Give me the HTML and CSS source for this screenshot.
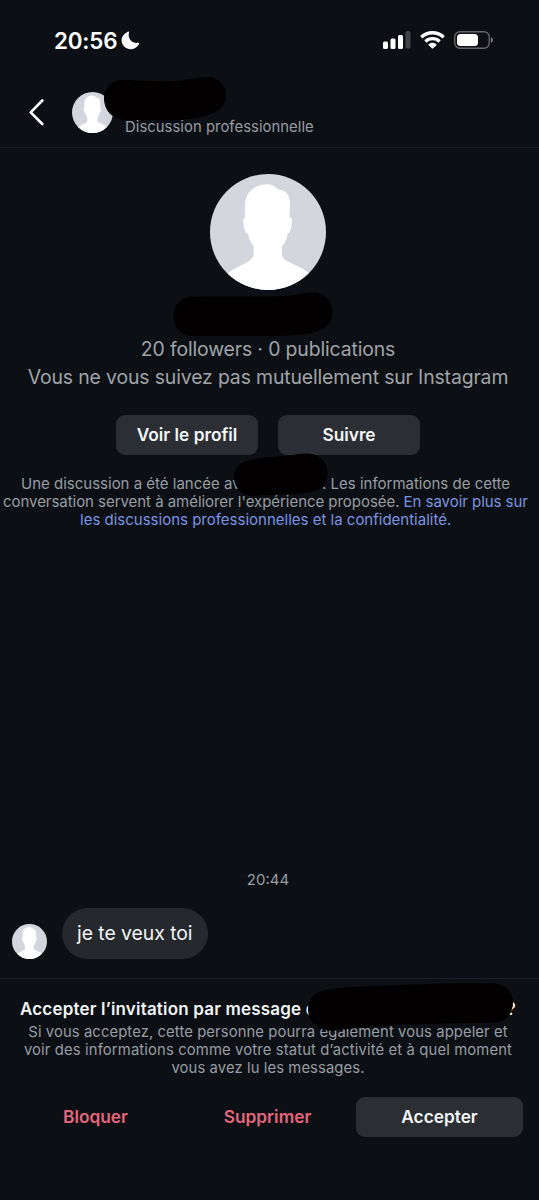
FILE: index.html
```html
<!DOCTYPE html>
<html lang="fr">
<head>
<meta charset="utf-8">
<title>Discussion</title>
<link rel="stylesheet" href="styles.css">
</head>
<body>
<svg class="defs" width="0" height="0" aria-hidden="true">
  <symbol id="avatar" viewBox="0 0 116 116">
    <clipPath id="round"><circle cx="58" cy="58" r="58"/></clipPath>
    <g clip-path="url(#round)">
      <rect width="116" height="116" fill="#d3d6dc"/>
      <path fill="#fff" d="M35.500 43C33 28 36.500 19 44 14C51 9 63 8.500 68 15.500C77 16 80 22 80 31L79.500 43C82.500 43 82.500 48 81 54C80 59 79 58.500 77.500 60C77 65 75 69 72 72V80C72 84 75 86 79 88C87 92 93 94 99 99L110 117H6L18 99C26 93 33 91 39 87C43 84 43.500 83 43.500 80V72C40 68 39 64 38 60C35.500 59 34.500 56 34 53C33 48 32.500 44 35.500 43Z"/>
    </g>
  </symbol>
</svg>
<div class="screen">
  <div class="status">
    <span class="clock">20:56</span>
    <svg class="moon" width="19" height="19" viewBox="0 0 19 19"><path fill="#fff" d="M6.800.8C7.700.3 8.300.9 8 1.800C6.500 7 10.500 12.600 16.800 11.800C18 11.600 18.500 12.300 17.900 13.200C14.500 19 7.500 19.600 3.400 15.700C-1.200 11.300-.3 4 6.800.8Z"/></svg>
    <svg class="signal" width="28" height="18" viewBox="0 0 28 18">
      <g fill="#fff"><rect x="0" y="10.500" width="5" height="7.500" rx="1.500"/><rect x="7.500" y="7.500" width="5" height="10.500" rx="1.500"/><rect x="15" y="4" width="5" height="14" rx="1.500"/></g>
      <rect x="22.500" y="0" width="5" height="17.500" rx="1.500" fill="#404347"/>
    </svg>
    <svg class="wifi" width="25" height="18" viewBox="0 0 25 18">
      <g fill="none" stroke="#fff" stroke-width="3.400"><path d="M1.300 6.200C7.500.2 17.500.2 23.700 6.200"/><path d="M5.400 10.400C9.400 6.700 15.600 6.700 19.600 10.400"/></g>
      <path fill="#fff" d="M8.700 13.300C10.900 11.300 14.100 11.300 16.300 13.300C16.700 13.700 16.600 14 16.300 14.300L13.200 17.300Q12.500 17.900 11.800 17.300L8.700 14.300Q8.200 13.800 8.700 13.300Z"/>
    </svg>
    <svg class="battery" width="40" height="18" viewBox="0 0 40 18">
      <rect x=".7" y=".7" width="34.600" height="16.600" rx="5.300" fill="none" stroke="#65676b" stroke-width="1.400"/>
      <rect x="3" y="3" width="21" height="12" rx="3.500" fill="#fff"/>
      <path d="M37 6.200Q39 7 39 9T37 11.800Z" fill="#7b7d80"/>
    </svg>
  </div>
  <header class="header">
    <svg class="back" width="16" height="27" viewBox="0 0 16 27"><path d="M13.300 1.500L1.700 13.300L13.300 25" fill="none" stroke="#fff" stroke-width="2.600" stroke-linecap="round" stroke-linejoin="round"/></svg>
    <svg class="pic-s"><use href="#avatar"/></svg>
    <span class="kind">Discussion professionnelle</span>
  </header>
  <main class="thread">
    <svg class="pic-l"><use href="#avatar"/></svg>
    <div class="facts">
      <div class="stats">20 followers · 0 publications</div>
      <div class="mutual">Vous ne vous suivez pas mutuellement sur Instagram</div>
    </div>
    <div class="actions"><div class="btn"><span>Voir le profil</span></div><div class="btn"><span>Suivre</span></div></div>
    <div class="notice">
      <div class="n1"><span class="before">Une discussion a été lancée avec</span><span>. Les informations de cette</span></div>
      <div class="n2">conversation servent à améliorer l'expérience proposée. <span class="link">En savoir plus sur</span></div>
      <div class="n3"><span class="link">les discussions professionnelles et la confidentialité.</span></div>
    </div>
    <div class="time">20:44</div>
    <div class="message"><svg class="pic-m"><use href="#avatar"/></svg><div class="bubble">je te veux toi</div></div>
  </main>
  <footer class="request">
    <div class="ask"><span>Accepter l’invitation par message d</span><span>?</span></div>
    <div class="detail">
      <div class="d1">Si vous acceptez, cette personne pourra également vous appeler et</div>
      <div class="d2">voir des informations comme votre statut d’activité et à quel moment</div>
      <div class="d3">vous avez lu les messages.</div>
    </div>
    <div class="choices"><div class="choice danger">Bloquer</div><div class="choice danger">Supprimer</div><div class="choice accept">Accepter</div></div>
  </footer>
  <!-- Hand-drawn strokes hiding the names -->
  <svg class="marks" width="539" height="1200" viewBox="0 0 539 1200">
    <path d="M124 80C140 80 150 82 177 81C188 80 196 77 207 77C218 77 226 85 226 95C226 110 212 115 197 118C175 122 150 119 127 120C113 120 104 111 104 98C104 88 112 80 124 80Z"/>
    <path d="M193 296.500C230 295.500 260 297 287 296C298 295 304 292.500 313 292.500C325 292.500 332.500 302 332.500 313C332.500 326 321 332 303 334.500C270 337 230 335.500 193 336C181 336 173.500 327 173.500 316C173.500 305 181 296.500 193 296.500Z"/>
    <path d="M253 459.500C265 456 281 457 293 455C298 453.500 302 453.500 308 453.500C320 454 327.500 463 327.500 473C327.500 485 320 491 309 492.500C290 495 270 494.500 254 496C242 496 234 488 234 477C234 468 241 461 253 459.500Z"/>
    <path d="M326 990C350 985.500 376 986.500 402 985C435 983.500 465 983 493 983.500C506 984 513 992 513 1002C513 1014 506 1022 495 1022.500L429 1024C390 1025 360 1027 336 1030.500C318 1033 308 1021 308 1009C308 998 315 992 326 990Z"/>
  </svg>
</div>
</body>
</html>
```

FILE: styles.css
```css
body { margin: 0; background: #0c1014; }
.screen {
  position: relative;
  width: 539px;
  height: 1200px;
  box-sizing: border-box;
  overflow: hidden;
  display: flex;
  flex-direction: column;
  background: #0c1014;
  color: #f3f5f7;
  font-family: Inter, "Liberation Sans", sans-serif;
  white-space: nowrap;
}
svg { display: block; flex: none; }
.defs { position: absolute; }
.marks { position: absolute; left: 0; top: 0; fill: #020001; }

.status { height: 80px; box-sizing: border-box; padding-left: 54px; display: flex; align-items: center; }
.clock { width: 67px; font-size: 22.4px; font-weight: 580; letter-spacing: -0.2px; color: #fff; }
.moon { margin-top: 1px; }
.signal { margin-left: 243px; }
.wifi { margin-left: 9px; }
.battery { margin-left: 9px; }

.header { height: 68px; box-sizing: border-box; padding: 0 29px; display: flex; align-items: center; border-bottom: 1px solid #1c2025; }
.back { margin-top: -3px; }
.pic-s { width: 41px; height: 41px; margin-left: 27px; margin-top: -2px; }
.kind { margin-left: 12px; margin-top: 26px; font-size: 14.8px; letter-spacing: 0.06px; color: #989da5; }

.thread { height: 830px; display: flex; flex-direction: column; align-items: center; }
.pic-l { width: 116px; height: 116px; margin-top: 26px; margin-right: 3px; }
.facts { margin-top: 45px; margin-right: 3px; font-size: 19.4px; letter-spacing: -0.13px; line-height: 28px; color: #a0a4a9; text-align: center; display: flex; flex-direction: column; align-items: center; }
.actions { display: flex; gap: 20px; margin-top: 24px; margin-right: 3px; }
.btn { width: 142px; height: 40px; border-radius: 9px; background: #2b2e33; display: flex; align-items: center; justify-content: center; font-size: 17.3px; font-weight: 600; line-height: 20px; }
.notice { margin-top: 20px; width: 539px; font-size: 15px; line-height: 18px; color: #989da3; }
.n1 { padding-left: 21px; display: flex; }
.before { width: 301px; }
.n2 { padding-left: 3px; letter-spacing: -0.045px; }
.n3 { padding-left: 80px; }
.link { color: #7c93e4; }
.time { margin-top: 341px; margin-right: 3px; font-size: 15px; line-height: 20px; color: #989da3; }
.message { align-self: stretch; display: flex; align-items: flex-end; padding-left: 12px; margin-top: 18px; }
.pic-m { width: 35px; height: 35px; }
.bubble { width: 146px; height: 51px; box-sizing: border-box; margin-left: 15px; border-radius: 26px; background: #25282d; line-height: 50px; padding-left: 15px; font-size: 19.4px; letter-spacing: -0.05px; }

.request { height: 222px; box-sizing: border-box; border-top: 1px solid #1c2025; padding-top: 20px; }
.ask { width: 496px; margin-left: 20px; display: flex; justify-content: space-between; font-size: 17px; letter-spacing: 0.18px; font-weight: 600; line-height: 21px; }
.detail { margin-top: 3px; padding-right: 3px; display: flex; flex-direction: column; align-items: center; font-size: 14.8px; letter-spacing: 0.1px; line-height: 18px; color: #989da5; }
.d2 { letter-spacing: 0.14px; }
.choices { margin: 20px 16px 0 12px; display: flex; gap: 5px; }
.choice { width: 167px; height: 40px; box-sizing: border-box; padding-bottom: 1px; border-radius: 9px; display: flex; align-items: center; justify-content: center; font-size: 17.3px; font-weight: 600; line-height: 20px; }
.danger { color: #e4667d; }
.accept { background: #2b2e33; }
```
